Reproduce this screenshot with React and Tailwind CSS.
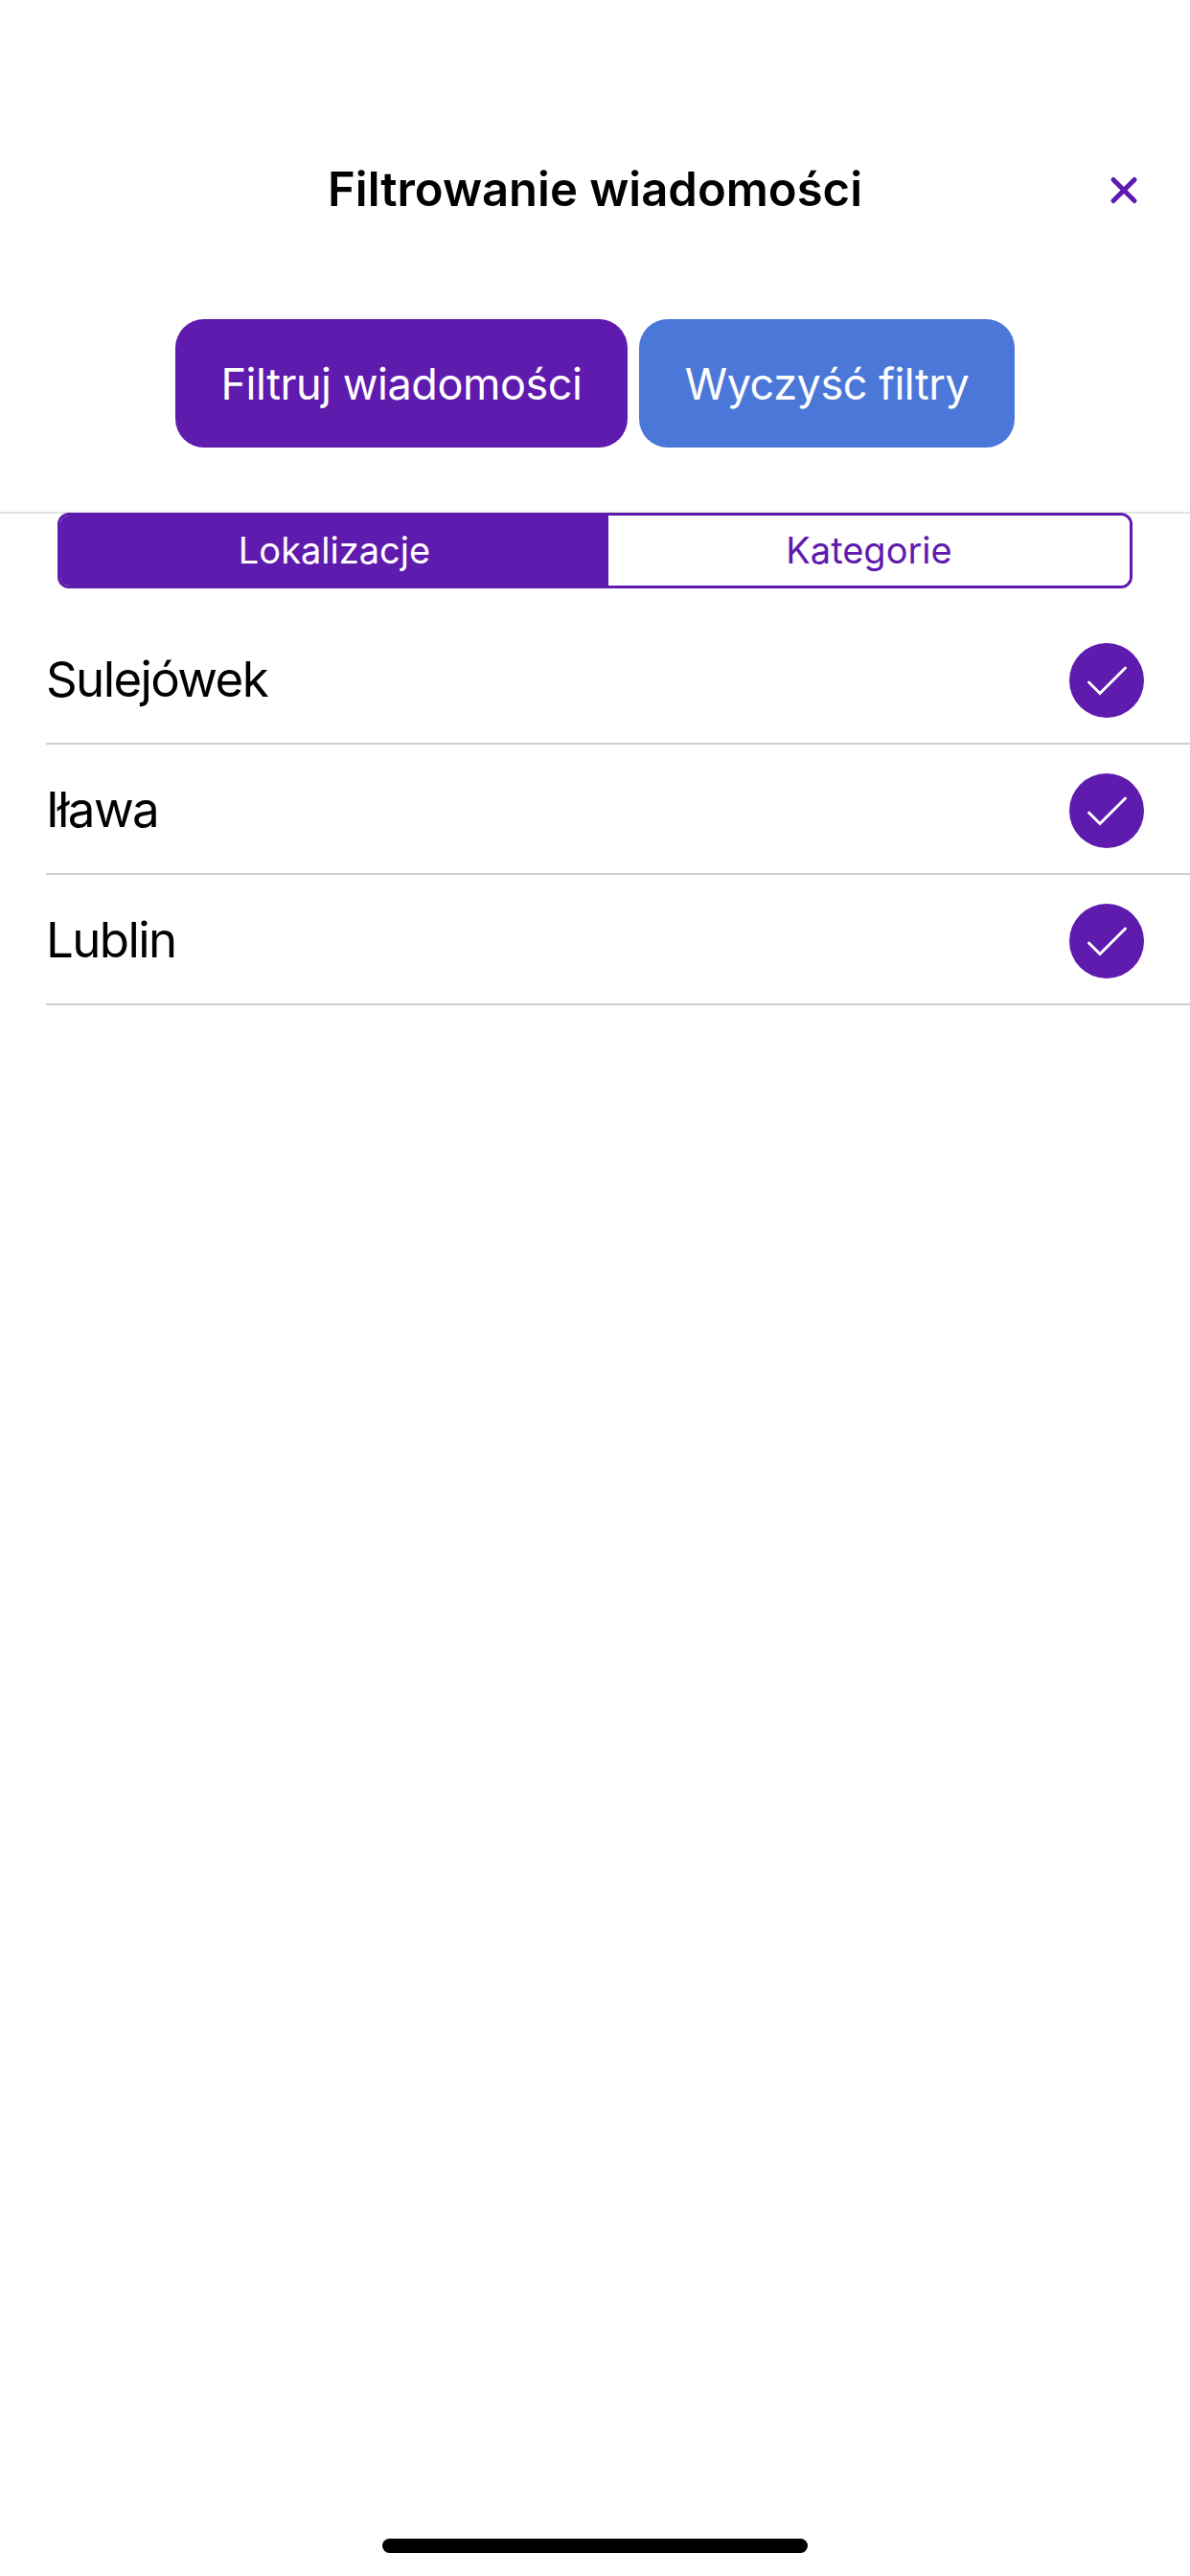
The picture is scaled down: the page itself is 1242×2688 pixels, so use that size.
import React from "react";

const locations = ["Sulejówek", "Iława", "Lublin"];

const Check = () => (
  <span className="w-[78px] h-[78px] rounded-full bg-[#5f1aae] flex-none">
    <svg width="78" height="78" viewBox="0 0 78 78" fill="none">
      <path d="M20.5 41 L32 52.5 L58.5 26" stroke="#fff" strokeWidth="3" strokeLinecap="round" strokeLinejoin="miter" />
    </svg>
  </span>
);

const App = () => {
  return (
    <div className="w-[1242px] h-[2688px] bg-white flex flex-col font-['Inter',sans-serif] overflow-hidden">
      {/* Header */}
      <div className="grid grid-cols-[1fr_auto_1fr] items-center pt-[160px] h-[236px]">
        <div />
        <h1 className="text-[49px] leading-[76px] font-semibold text-black">Filtrowanie wiadomości</h1>
        <div className="flex justify-end pr-[54px]">
          <svg width="30" height="31" viewBox="0 0 30 31" fill="none">
            <path d="M4 4.5 L26 26.5 M26 4.5 L4 26.5" stroke="#5f1aae" strokeWidth="5" strokeLinecap="round" />
          </svg>
        </div>
      </div>

      {/* Buttons */}
      <div className="flex justify-center gap-[12px] pt-[97px] pb-[67px] border-b-2 border-[#e3e3e3]">
        <button className="w-[472px] h-[134px] pt-[1px] rounded-[30px] bg-[#5f1aae] text-white text-[45px] tracking-[-0.45px]">Filtruj wiadomości</button>
        <button className="w-[392px] h-[134px] pt-[1px] rounded-[30px] bg-[#4b78d8] text-white text-[45px] tracking-[-0.45px]">Wyczyść filtry</button>
      </div>

      {/* Tabs */}
      <div className="mx-[60px] -mt-px h-[79px] flex rounded-[12px] border-[3px] border-[#5f1aae] overflow-hidden text-[38px]">
        <div className="w-[572px] bg-[#5f1aae] text-white flex items-center justify-center">Lokalizacje</div>
        <div className="flex-1 bg-white text-[#5f1aae] flex items-center justify-center">Kategorie</div>
      </div>

      {/* Rows */}
      <div className="pl-[48px] pt-[27px]">
        {locations.map((name) => (
          <div key={name} className="h-[136px] pt-[3px] flex items-center justify-between pr-[48px] border-b-2 border-[#cfcfd2]">
            <span className="text-[51px] tracking-[-1.6px] text-black">{name}</span>
            <Check />
          </div>
        ))}
      </div>

      {/* Home indicator */}
      <div className="mt-auto mb-[24px] mx-auto w-[444px] h-[15px] rounded-full bg-black" />
    </div>
  );
};

export default App;
